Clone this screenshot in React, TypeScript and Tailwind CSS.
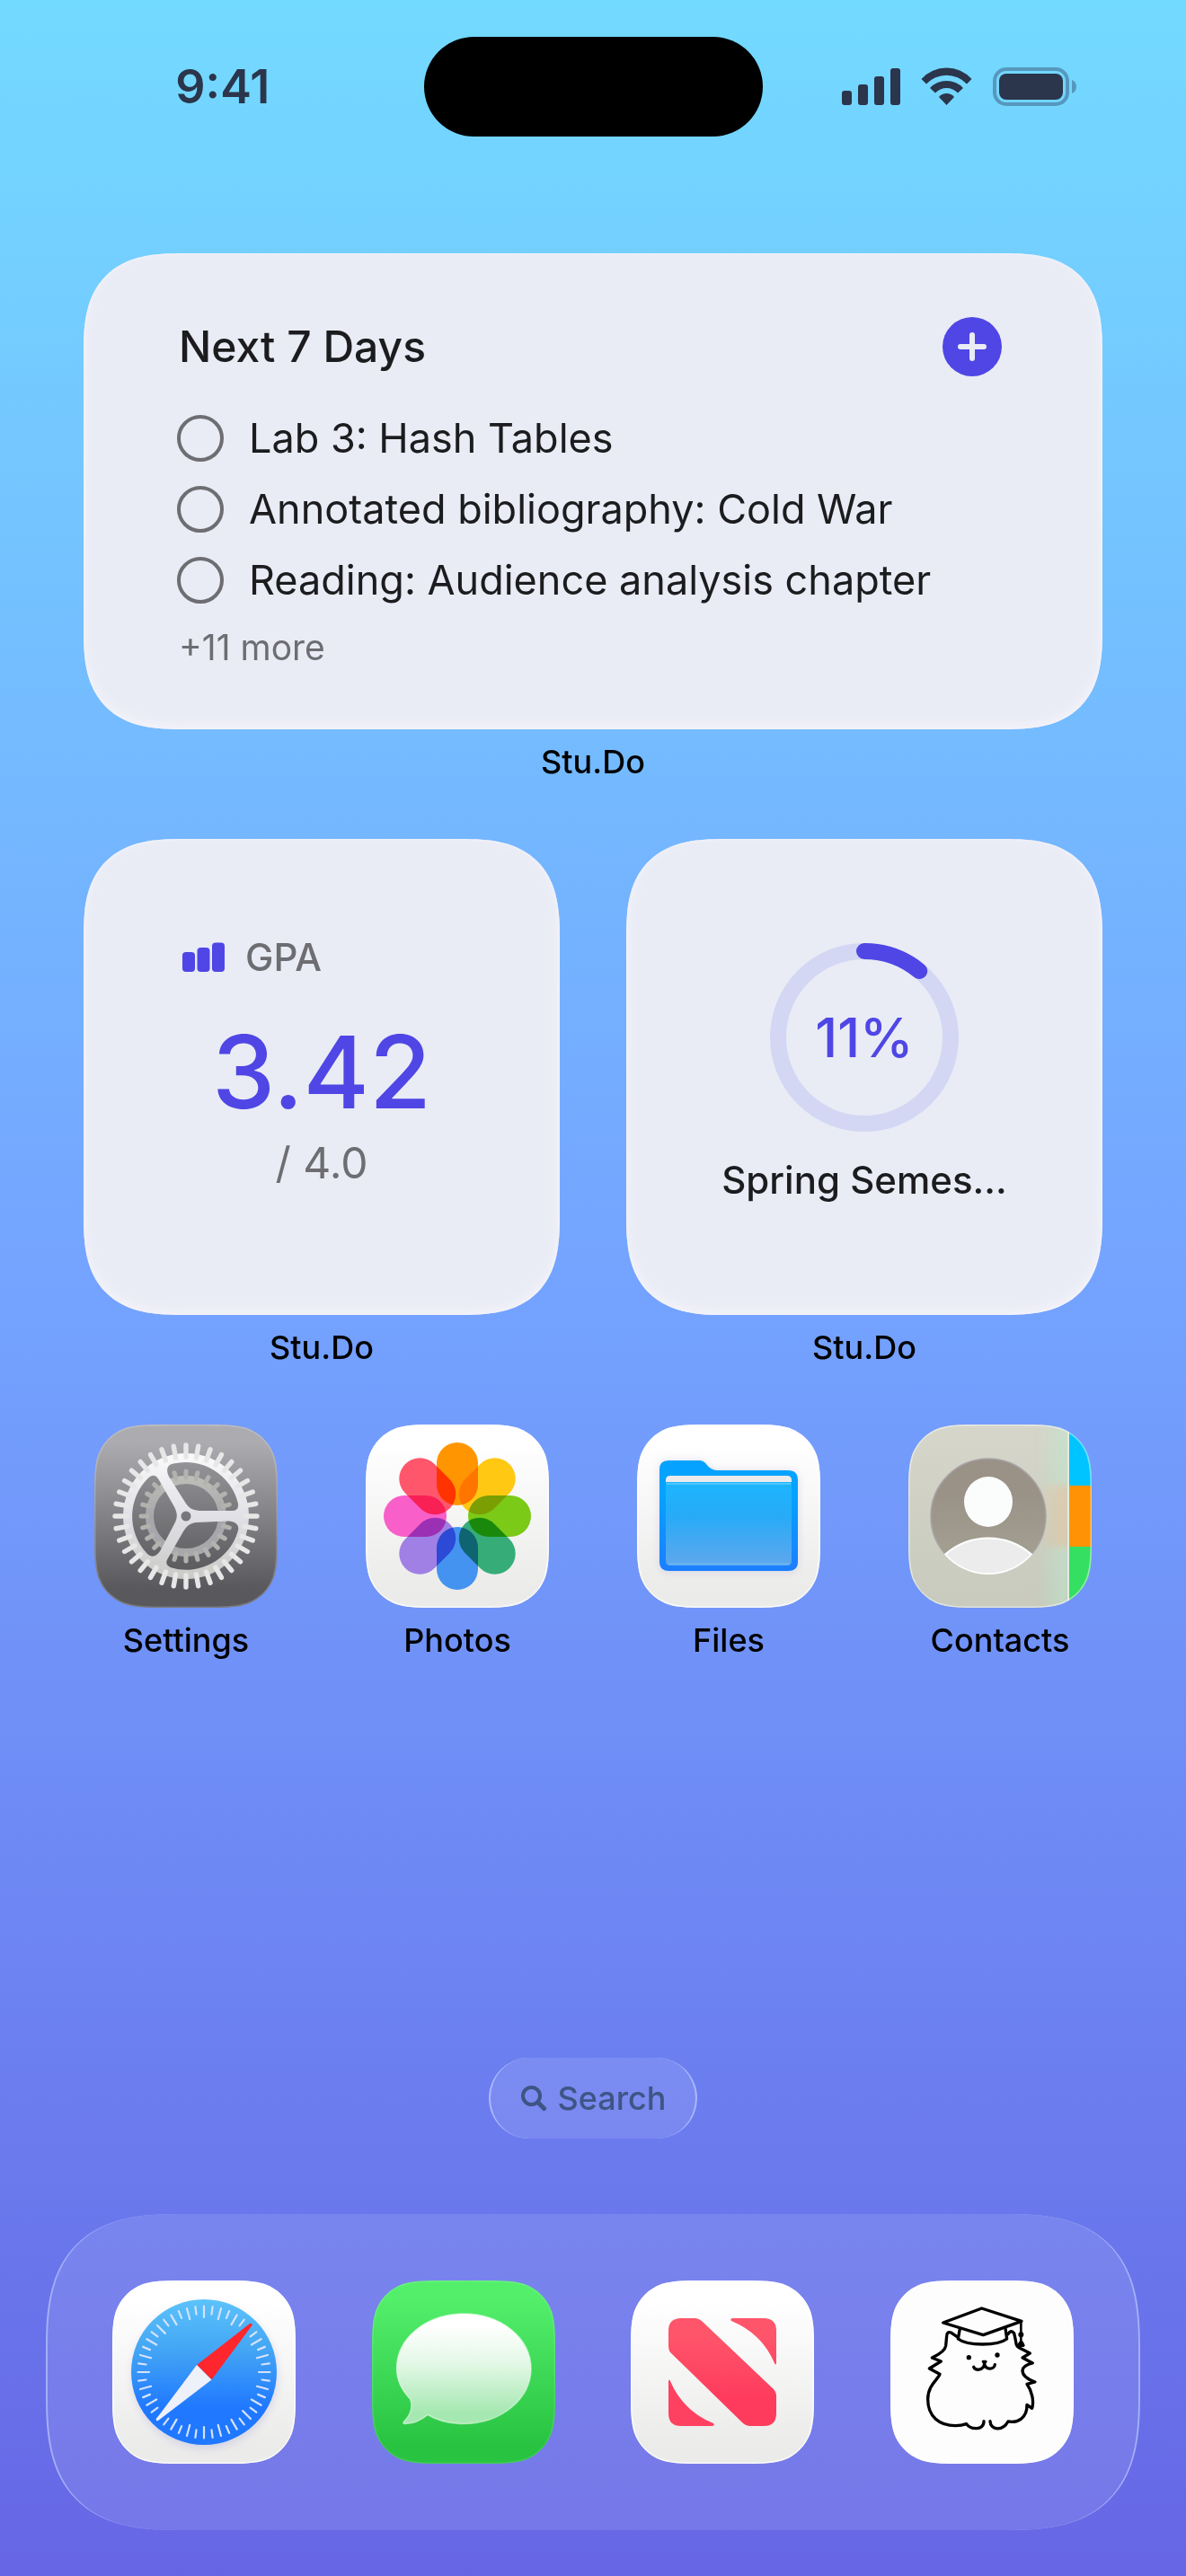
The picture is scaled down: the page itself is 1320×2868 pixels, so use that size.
import clsx from 'clsx'
import type { ReactNode } from 'react'

const cardShape =
  'rounded-[96px] supports-[corner-shape:squircle]:rounded-[110px] [corner-shape:superellipse(1.43)]'

const tasks = ['Lab 3: Hash Tables', 'Annotated bibliography: Cold War', 'Reading: Audience analysis chapter']

// continuous corner path, s = size of the square, r = corner radius
function squirclePath(s: number, r: number) {
  const a = 1.5287 * r
  const b = 1.0885 * r
  const c = 0.8684 * r
  const d = 0.6315 * r
  const e = 0.0749 * r
  const f = 0.3728 * r
  const g = 0.1691 * r
  return [
    `M${a} 0 H${s - a}`,
    `C${s - b} 0 ${s - c} 0 ${s - d} ${e} C${s - f} ${g} ${s - g} ${f} ${s - e} ${d} C${s} ${c} ${s} ${b} ${s} ${a}`,
    `V${s - a}`,
    `C${s} ${s - b} ${s} ${s - c} ${s - e} ${s - d} C${s - g} ${s - f} ${s - f} ${s - g} ${s - d} ${s - e} C${s - c} ${s} ${s - b} ${s} ${s - a} ${s}`,
    `H${a}`,
    `C${b} ${s} ${c} ${s} ${d} ${s - e} C${f} ${s - g} ${g} ${s - f} ${e} ${s - d} C0 ${s - c} 0 ${s - b} 0 ${s - a}`,
    `V${a}`,
    `C0 ${b} 0 ${c} ${e} ${d} C${g} ${f} ${f} ${g} ${d} ${e} C${c} 0 ${b} 0 ${a} 0Z`,
  ].join(' ')
}

const iconPath = squirclePath(204, 54)

function IconTile({
  id,
  from,
  to,
  rim = 0.7,
  children,
}: {
  id: string
  from: string
  to: string
  rim?: number
  children: ReactNode
}) {
  return (
    <svg viewBox="0 0 204 204" className="size-[204px]" aria-hidden="true">
      <defs>
        <linearGradient id={`${id}-bg`} x1="0" y1="0" x2="0" y2="1">
          <stop offset="0.1" stopColor={from} />
          <stop offset="0.9" stopColor={to} />
        </linearGradient>
        <clipPath id={`${id}-clip`}>
          <path d={iconPath} />
        </clipPath>
      </defs>
      <g clipPath={`url(#${id}-clip)`}>
        <rect width="204" height="204" fill={`url(#${id}-bg)`} />
        {children}
        <path d={iconPath} fill="none" stroke="#fff" strokeOpacity={rim} strokeWidth="3" />
      </g>
    </svg>
  )
}

function Teeth({ count, from, to, width }: { count: number; from: number; to: number; width: number }) {
  return (
    <>
      {Array.from({ length: count }, (_, i) => (
        <line
          key={i}
          x1="102"
          x2="102"
          y1={102 - from}
          y2={102 - to}
          strokeWidth={width}
          strokeLinecap="round"
          transform={`rotate(${(360 / count) * i} 102 102)`}
        />
      ))}
    </>
  )
}

function SettingsIcon() {
  const opening =
    'M83 58 C80 52 80 45 88 43.5 A60 60 0 0 1 160 88 Q161 96 153 96 L120 96 C111 96 106 94 102 88 Z'
  return (
    <IconTile id="settings" from="#acacb0" to="#59595d" rim={0.2}>
      <defs>
        <linearGradient id="gear" gradientUnits="userSpaceOnUse" x1="0" y1="20" x2="0" y2="184">
          <stop offset="0" stopColor="#ffffff" />
          <stop offset="0.5" stopColor="#e0e0e6" />
          <stop offset="1" stopColor="#c6c8c0" />
        </linearGradient>
        <linearGradient id="gear-back" gradientUnits="userSpaceOnUse" x1="0" y1="50" x2="0" y2="154">
          <stop offset="0" stopColor="#c3c4bb" />
          <stop offset="0.5" stopColor="#a6a6ab" />
          <stop offset="1" stopColor="#a9a9ac" />
        </linearGradient>
        <mask id="gear-mask">
          <rect width="204" height="204" fill="#fff" />
          {[0, 120, 240].map((deg) => (
            <path key={deg} d={opening} fill="#000" transform={`rotate(${deg} 102 102)`} />
          ))}
          <circle cx="102" cy="102" r="5.5" fill="#000" />
        </mask>
      </defs>
      <circle cx="102" cy="102" r="70" fill="#000" fillOpacity="0.08" />
      <g stroke="url(#gear-back)" fill="none">
        <circle cx="102" cy="102" r="40.5" strokeWidth="9" />
      </g>
      <g stroke="#b2b3af">
        <Teeth count={24} from={43} to={50} width={5} />
      </g>
      <g mask="url(#gear-mask)">
        <circle cx="102" cy="102" r="70" fill="url(#gear)" />
        <g stroke="#e6e7e6">
          <Teeth count={36} from={66} to={79} width={5.4} />
        </g>
      </g>
    </IconTile>
  )
}

const petals = ['#ff9500', '#ffc812', '#7bca17', '#36ad78', '#4593f0', '#a080e4', '#f85fc9', '#ff566c']

function PhotosIcon() {
  return (
    <IconTile id="photos" from="#ffffff" to="#ebebea">
      <g style={{ isolation: 'isolate' }}>
        {petals.map((color, i) => (
          <rect
            key={color}
            x="79"
            y="20"
            width="46"
            height="70"
            rx="23"
            fill={color}
            transform={`rotate(${i * 45} 102 102)`}
            className="mix-blend-multiply"
          />
        ))}
      </g>
    </IconTile>
  )
}

function FilesIcon() {
  return (
    <IconTile id="files" from="#ffffff" to="#ebebea">
      <defs>
        <linearGradient id="folder-back" x1="0" y1="0" x2="0" y2="1">
          <stop offset="0.3" stopColor="#05a3ff" />
          <stop offset="1" stopColor="#1b7eff" />
        </linearGradient>
        <linearGradient id="folder-front" x1="0" y1="0" x2="0" y2="1">
          <stop offset="0" stopColor="#1cb6ff" />
          <stop offset="0.4" stopColor="#27abf8" />
          <stop offset="1" stopColor="#5fa7ec" />
        </linearGradient>
      </defs>
      <path
        d="M25 50 Q25 40 35 40 H69 Q74 40 77 44 Q82 51 89 51 H168 Q179 51 179 62 V153 Q179 164 168 164 H36 Q25 164 25 153Z"
        fill="#8a8ad8"
        fillOpacity="0.25"
        className="blur-[4px]"
      />
      <path
        d="M25 50 Q25 40 35 40 H69 Q74 40 77 44 Q82 51 89 51 H168 Q179 51 179 62 V153 Q179 163 168 163 H36 Q25 163 25 153Z"
        fill="url(#folder-back)"
      />
      <path d="M32 66 V62 Q32 57 37 57 H167 Q172 57 172 62 V66Z" fill="#ebebeb" />
      <path d="M32 64 H172 V152 Q172 157 167 157 H37 Q32 157 32 152Z" fill="url(#folder-front)" />
      <path d="M33 66 H171" stroke="#4fc6ff" strokeWidth="2" />
      <path d="M35 155 H169" stroke="#67b4f3" strokeWidth="2" />
    </IconTile>
  )
}

function ContactsIcon() {
  return (
    <IconTile id="contacts" from="#d5d5c9" to="#c8cbbd" rim={0.45}>
      <defs>
        <linearGradient id="tab-glow-green">
          <stop offset="0" stopColor="#b9ecd0" stopOpacity="0" />
          <stop offset="1" stopColor="#b9ecd0" stopOpacity="0.5" />
        </linearGradient>
        <linearGradient id="tab-glow-orange">
          <stop offset="0" stopColor="#ecc591" stopOpacity="0" />
          <stop offset="1" stopColor="#ecc591" stopOpacity="0.5" />
        </linearGradient>
        <linearGradient id="avatar" x1="0" y1="0" x2="0" y2="1">
          <stop offset="0.3" stopColor="#9a9287" />
          <stop offset="1" stopColor="#a5a394" />
        </linearGradient>
      </defs>
      <g className="blur-[4px]">
        <rect x="143" width="36" height="68" fill="url(#tab-glow-green)" />
        <rect x="143" y="68" width="36" height="68" fill="url(#tab-glow-orange)" />
        <rect x="143" y="136" width="36" height="68" fill="url(#tab-glow-green)" />
      </g>
      <circle cx="89" cy="102" r="64" fill="url(#avatar)" stroke="#a8a5a8" strokeWidth="1.5" />
      <ellipse cx="89" cy="86" rx="27" ry="28" fill="#fbfcfc" />
      <path
        d="M41 144.500 Q62 126.500 89 126.500 Q116 126.500 137 144.500 A64 64 0 0 1 41 144.500Z"
        fill="#ececec"
        stroke="#fff"
        strokeWidth="1.8"
        strokeLinejoin="round"
      />
      <rect x="179" width="25" height="68" fill="#00c4ff" />
      <rect x="179" y="68" width="25" height="68" fill="#ff9305" />
      <rect x="179" y="136" width="25" height="68" fill="#34df62" />
      <rect x="177" width="2" height="204" fill="#e3ebe0" />
    </IconTile>
  )
}

function SafariIcon() {
  return (
    <IconTile id="safari" from="#ffffff" to="#ebebea">
      <defs>
        <linearGradient id="compass" x1="0" y1="0" x2="0" y2="1">
          <stop offset="0" stopColor="#5cc3fb" />
          <stop offset="0.35" stopColor="#43a5f4" />
          <stop offset="0.75" stopColor="#1f78ff" />
        </linearGradient>
      </defs>
      <circle cx="103" cy="106" r="81" fill="#8a8ad8" fillOpacity="0.25" className="blur-[4px]" />
      <circle cx="102" cy="102" r="81" fill="url(#compass)" />
      {Array.from({ length: 48 }, (_, i) => (
        <line
          key={i}
          x1="102"
          x2="102"
          y1="28.500"
          y2={i % 2 === 0 ? 41 : 37}
          stroke="#d5e2fb"
          strokeWidth="2.200"
          strokeLinecap="round"
          transform={`rotate(${i * 7.5} 102 102)`}
        />
      ))}
      <path d="M94 94 L153 48 Q156 47 155.500 50 L110.500 110.500Z" fill="#ff262e" />
      <path d="M94 94 L110.500 110.500 L51 156 Q48 157 49 154Z" fill="#eef0fa" />
    </IconTile>
  )
}

function MessagesIcon() {
  return (
    <IconTile id="messages" from="#53ef6b" to="#28c341" rim={0.12}>
      <defs>
        <linearGradient id="bubble" x1="0" y1="0" x2="0" y2="1">
          <stop offset="0.1" stopColor="#ffffff" />
          <stop offset="0.45" stopColor="#e3f8e6" />
          <stop offset="0.9" stopColor="#a6e8b1" />
        </linearGradient>
      </defs>
      <path
        d="M102 37 C143.500 37 177 64 177 98 C177 132 143.500 159.500 102 159.500 C87 159.500 73 156 62 149.500 C55 155.500 46 159.500 37 159.500 C34 159.500 34.500 158 36.500 156 C42 150 46 141 42.500 132 C33 122 27.500 111 27.500 98 C27.500 64 60.500 37 102 37Z"
        fill="url(#bubble)"
        stroke="#fff"
        strokeOpacity="0.5"
        strokeWidth="1.500"
      />
    </IconTile>
  )
}

function NewsIcon() {
  const corner = 'M113 42 H148 Q162 42 162 56 V92 Q161 95 160 92 Q146 59 112 45 Q110 43 113 42Z'
  return (
    <IconTile id="news" from="#ffffff" to="#ebebea">
      <defs>
        <linearGradient id="news-ink" gradientUnits="userSpaceOnUse" x1="0" y1="42" x2="0" y2="162">
          <stop offset="0.15" stopColor="#ff556a" />
          <stop offset="0.75" stopColor="#fe3b5d" />
        </linearGradient>
      </defs>
      <g fill="url(#news-ink)">
        <path d="M56 42 H71 Q76 42 80 46 L159 121 Q162 124 162 129 V148 Q162 162 148 162 H133 Q128 162 124 158 L45 81 Q42 78 42 73 V56 Q42 42 56 42Z" />
        <path d={corner} />
      </g>
      <path d={corner} fill="#fe4160" transform="rotate(180 102 102)" />
    </IconTile>
  )
}

function StuDoIcon() {
  return (
    <IconTile id="studo" from="#fdfdfd" to="#fdfdfd">
      <g
        transform="translate(-6 -9) scale(0.3333)"
        fill="none"
        stroke="#000"
        strokeWidth="10"
        strokeLinecap="round"
        strokeLinejoin="round"
      >
        <path d="M323 120 L456 163 L328 209 L194 168Z" />
        <path d="M250 188 L244 222 C275 246 376 246 407 222 L402 187" />
        <path d="M454 163 V236" strokeWidth="8" />
        <path d="M452 234 H457 L462 244 H446Z" />
        <circle cx="454" cy="208" r="4" />
        <path d="M244 217 L222 202 Q207 195 206 212 L203 245 C201 262 177 276 157 285 L187 297 L148 321 L183 340 C178 357 143 376 143 424 C143 482 182 512 235 512 Q255 512 272 506 C285 525 330 530 330 497" />
        <path d="M351 497 C352 528 393 531 411 498 C442 504 475 488 474 442 L491 454 C498 430 491 397 474 373 L501 366 C478 358 459 346 459 328 Q460 311 493 303 L459 285 L484 270 L449 252 C438 246 438 240 436 226 L431 203 Q421 190 411 206" />
        <path d="M296 316 C300 329 328 329 332 306 C336 326 365 326 367 308" />
        <path d="M328 298 H336 L332 303Z" />
        <circle cx="280" cy="284" r="8" fill="#000" stroke="none" />
        <circle cx="375" cy="276" r="8" fill="#000" stroke="none" />
      </g>
    </IconTile>
  )
}

const apps = [
  { name: 'Settings', icon: <SettingsIcon /> },
  { name: 'Photos', icon: <PhotosIcon /> },
  { name: 'Files', icon: <FilesIcon /> },
  { name: 'Contacts', icon: <ContactsIcon /> },
]

const dock = [
  { name: 'Safari', icon: <SafariIcon /> },
  { name: 'Messages', icon: <MessagesIcon /> },
  { name: 'News', icon: <NewsIcon /> },
  { name: 'Stu.Do', icon: <StuDoIcon /> },
]

function StatusBar() {
  return (
    <header className="grid grid-cols-[1fr_377px_1fr] items-center pt-[41px] text-[#2b354b]">
      <div className="flex justify-center pl-6">
        <time className="text-[52px] leading-[56px] font-semibold">9:41</time>
      </div>
      <div className="h-[111px] rounded-full bg-black" />
      <div className="flex justify-center pr-8">
        <svg viewBox="0 0 262 44" className="h-11 w-[262px]" fill="currentColor" aria-hidden="true">
          <rect x="0" y="26" width="11" height="16" rx="3" />
          <rect x="18" y="19" width="11" height="23" rx="3" />
          <rect x="36" y="10" width="11" height="32" rx="3" />
          <rect x="54" y="1" width="11" height="41" rx="3" />
          <g transform="translate(88 0)">
            <path d="M0.500 13 A37.700 37.700 0 0 1 56.500 13 L51 18.500 A31 31 0 0 0 6 18.500Z" />
            <path d="M10 23 A25.500 25.500 0 0 1 47 23 L41 28.500 A17 17 0 0 0 16 28.500Z" />
            <path d="M20 33 A11 11 0 0 1 37 33 L28.500 42Z" />
          </g>
          <rect x="170" y="2" width="81" height="39" rx="13" fill="none" stroke="#5698bd" strokeWidth="4" />
          <rect x="175" y="7" width="71" height="29" rx="8" />
          <path d="M256 14 Q261 16 261 21.500 Q261 27 256 29Z" fill="#5698bd" />
        </svg>
      </div>
    </header>
  )
}

function Widget({ className, children }: { className?: string; children: ReactNode }) {
  return (
    <figure className="min-w-0 flex-1 text-center">
      <div
        className={clsx(
          'h-[530px] bg-[#e9ecf5] text-[#1c1c1f] shadow-[inset_0_-4px_14px_#f5f3fb,inset_0_0_3px_#f8f6fd]',
          cardShape,
          className
        )}
      >
        {children}
      </div>
      <figcaption className="mt-[14px] text-[36px] leading-[44px] font-medium">Stu.Do</figcaption>
    </figure>
  )
}

function TasksWidget() {
  return (
    <Widget className="pt-[71px] pr-28 pl-[104px] text-left">
      <div className="flex items-center justify-between pl-0.5">
        <h2 className="text-[48px] leading-[56px] font-medium">Next 7 Days</h2>
        <button
          type="button"
          aria-label="Add task"
          className="flex size-[66px] items-center justify-center rounded-full bg-[#4f46e5]"
        >
          <svg viewBox="0 0 32 32" className="size-8" stroke="#e9ecf5" strokeWidth="6" strokeLinecap="round">
            <path d="M16 3 V29 M3 16 H29" />
          </svg>
        </button>
      </div>
      <ul className="mt-[29px]">
        {tasks.map((task) => (
          <li key={task}>
            <label className="flex h-[79px] items-center gap-7 text-[45px] leading-[56px]">
              <input
                type="checkbox"
                className="size-[52px] shrink-0 appearance-none rounded-full border-4 border-[#6d6d72]"
              />
              {task}
            </label>
          </li>
        ))}
      </ul>
      <p className="mt-3 pl-0.5 text-[39px] leading-[48px] text-[#6d6d72]">+11 more</p>
    </Widget>
  )
}

function GpaWidget() {
  return (
    <Widget className="pt-[108px]">
      <div className="flex items-center gap-[22px] pl-[110px]">
        <svg viewBox="0 0 48 34" className="h-[34px] w-12" fill="#4f46e5" aria-hidden="true">
          <rect x="0" y="11" width="14" height="22" rx="4" />
          <rect x="16.500" y="6" width="14" height="27" rx="4" />
          <rect x="33" y="0.500" width="14" height="32.500" rx="4" />
        </svg>
        <span className="text-[42px] leading-[48px] font-medium text-[#6d6d72]">GPA</span>
      </div>
      <div className="mt-[43px] text-[112px] leading-[120px] font-medium text-[#4f46e5]">3.42</div>
      <div className="mt-[14px] text-[48px] leading-[56px] text-[#6d6d72]">/ 4.0</div>
    </Widget>
  )
}

function ProgressWidget({ value }: { value: number }) {
  const length = 2 * Math.PI * 96
  return (
    <Widget className="flex flex-col items-center pt-[116px]">
      <div className="grid place-items-center *:col-start-1 *:row-start-1">
        <svg viewBox="0 0 210 210" className="size-[210px] -rotate-90" fill="none" strokeWidth="18">
          <circle cx="105" cy="105" r="96" stroke="#d3d7f3" />
          <circle
            cx="105"
            cy="105"
            r="96"
            stroke="#4f46e5"
            strokeLinecap="round"
            strokeDasharray={`${(length * value) / 100} ${length}`}
          />
        </svg>
        <span className="text-[60px] leading-[72px] font-medium text-[#4f46e5]">{value}%</span>
      </div>
      <div className="mt-[26px] text-[42px] leading-[56px] font-medium">Spring Semes…</div>
    </Widget>
  )
}

export default function App() {
  return (
    <div className="flex min-h-screen flex-col bg-linear-to-b from-[#73daff] via-[#74a3ff] to-[#6666e5] font-['Inter',sans-serif] text-black">
      <StatusBar />
      <main className="flex flex-1 flex-col gap-[64px] px-[93px] pt-[130px]">
        <div className="flex">
          <TasksWidget />
        </div>
        <div className="flex gap-[74px]">
          <GpaWidget />
          <ProgressWidget value={11} />
        </div>
        <nav className="flex justify-between px-3">
          {apps.map((app) => (
            <a key={app.name} href="#" className="flex w-[204px] flex-col items-center">
              {app.icon}
              <span className="mt-[14px] text-[36px] leading-[44px] font-medium">{app.name}</span>
            </a>
          ))}
        </nav>
      </main>
      <div className="flex justify-center">
        <button
          type="button"
          className="flex h-[90px] items-center gap-3 rounded-full border-x-2 border-[#a9b8fa] bg-white/10 px-[33px] text-[36px] leading-[44px] font-medium text-[#3f5484]"
        >
          <svg viewBox="0 0 30 30" className="size-[30px]" fill="none" stroke="currentColor" strokeLinecap="round">
            <circle cx="12.500" cy="12.500" r="9.500" strokeWidth="4" />
            <path d="M20 20 L26.500 26.500" strokeWidth="5" />
          </svg>
          Search
        </button>
      </div>
      <footer className="px-[51px] pt-[84px] pb-[51px]">
        <nav className="flex justify-between rounded-[130px] border-x-2 border-[#a3aff6] bg-white/10 px-[72px] py-[74px] [corner-shape:superellipse(1.43)] supports-[corner-shape:squircle]:rounded-[150px]">
          {dock.map((app) => (
            <a key={app.name} href="#" aria-label={app.name}>
              {app.icon}
            </a>
          ))}
        </nav>
      </footer>
    </div>
  )
}
